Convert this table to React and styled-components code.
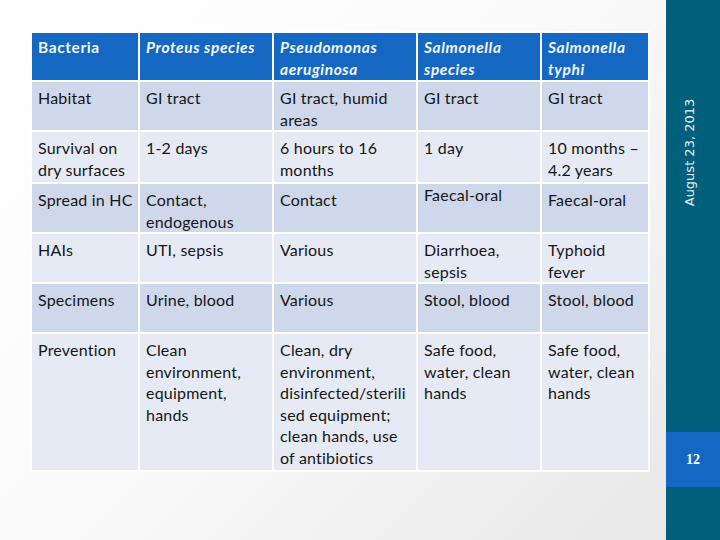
import React from "react";
import styled, { createGlobalStyle } from "styled-components";

const GlobalStyle = createGlobalStyle`
  html, body {
    margin: 0;
    padding: 0;
  }
  body {
    width: 720px;
    height: 540px;
    overflow: hidden;
    font-family: Lato, "Liberation Sans", sans-serif;
  }
`;

const Slide = styled.div`
  width: 720px;
  height: 540px;
  display: flex;
  background: linear-gradient(135deg, #ffffff 0%, #fbfbfb 45%, #e6e6e6 100%);
`;

const Content = styled.div`
  flex: 1;
  min-width: 0;
  padding: 33px 0 0 32px;
`;

const Grid = styled.div`
  display: grid;
  grid-template-columns: 106px 132px 142px 122px 106px;
  grid-template-rows: 47px 48px 50px 48px 48px 48px 136px;
  gap: 2px;
  width: 616px;
  background: #ffffff;
  outline: 2px solid #ffffff;
`;

const HeadCell = styled.div`
  background: #1468c2;
  color: #f2f6ff;
  font-weight: 700;
  font-style: ${(p) => (p.italic ? "italic" : "normal")};
  font-size: 15.5px;
  letter-spacing: 0.6px;
  line-height: 22px;
  padding: 3px 0 0 6px;
  white-space: pre;
`;

const Cell = styled.div`
  background: ${(p) => (p.shade ? "#cfd8ea" : "#e6eaf5")};
  color: #161616;
  font-size: 16px;
  letter-spacing: 0.2px;
  line-height: 21.6px;
  padding: ${(p) => (p.raised ? "0" : "5px")} 0 0 6px;
  white-space: pre;
`;

const Sidebar = styled.aside`
  width: 54px;
  flex: none;
  background: #005f7b;
  display: grid;
  grid-template-columns: 54px;
  grid-template-rows: 92px 120px 220px 55px 1fr;
`;

const DateSlot = styled.div`
  grid-row: 2;
  min-width: 0;
  display: flex;
  align-items: center;
  justify-content: center;
`;

const DateText = styled.span`
  flex: none;
  transform: translateX(-3px) rotate(-90deg);
  white-space: nowrap;
  color: #e4eef2;
  font-family: "DejaVu Sans", sans-serif;
  font-size: 13px;
`;

const PageBox = styled.div`
  grid-row: 4;
  background: #1368c4;
  display: flex;
  align-items: center;
  justify-content: center;
  color: #ffffff;
  font-family: "Liberation Serif", serif;
  font-weight: 700;
  font-size: 14px;
`;

const header = [
  { text: "Bacteria" },
  { text: "Proteus species", italic: true },
  { text: "Pseudomonas\naeruginosa", italic: true },
  { text: "Salmonella\nspecies", italic: true },
  { text: "Salmonella\ntyphi", italic: true },
];

const rows = [
  ["Habitat", "GI tract", "GI tract, humid\nareas", "GI tract", "GI tract"],
  ["Survival on\ndry surfaces", "1-2 days", "6 hours to 16\nmonths", "1 day", "10 months –\n4.2 years"],
  ["Spread in HC", "Contact,\nendogenous", "Contact", "Faecal-oral", "Faecal-oral"],
  ["HAIs", "UTI, sepsis", "Various", "Diarrhoea,\nsepsis", "Typhoid\nfever"],
  ["Specimens", "Urine, blood", "Various", "Stool, blood", "Stool, blood"],
  [
    "Prevention",
    "Clean\nenvironment,\nequipment,\nhands",
    "Clean, dry\nenvironment,\ndisinfected/sterili\nsed equipment;\nclean hands, use\nof antibiotics",
    "Safe food,\nwater, clean\nhands",
    "Safe food,\nwater, clean\nhands",
  ],
];

const App = () => (
  <>
    <GlobalStyle />
    <Slide>
      <Content>
        <Grid>
          {header.map((h) => (
            <HeadCell key={h.text} italic={h.italic}>
              {h.text}
            </HeadCell>
          ))}
          {rows.map((row, r) =>
            row.map((text, c) => (
              <Cell
                key={r + "-" + c}
                shade={r % 2 === 0}
                raised={r === 2 && c === 3}
              >
                {text}
              </Cell>
            ))
          )}
        </Grid>
      </Content>
      <Sidebar>
        <DateSlot>
          <DateText>August 23, 2013</DateText>
        </DateSlot>
        <PageBox>12</PageBox>
      </Sidebar>
    </Slide>
  </>
);

export default App;
